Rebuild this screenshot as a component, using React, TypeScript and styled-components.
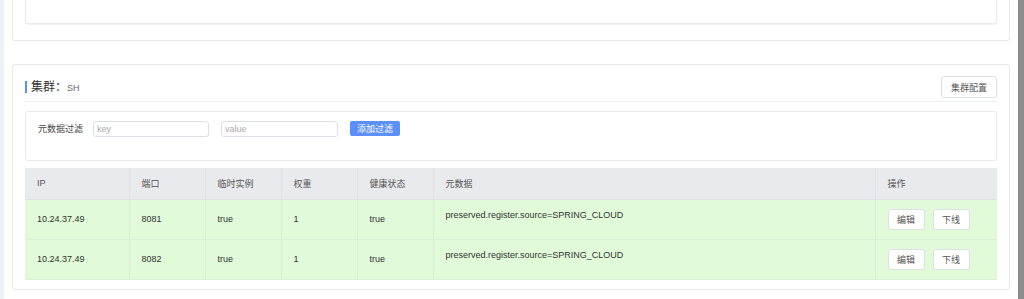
import styled, { createGlobalStyle } from "styled-components";

const GlobalStyle = createGlobalStyle`
  html, body {
    margin: 0;
    padding: 0;
    background: #ffffff;
    overflow: hidden;
  }
  body {
    font-family: "Liberation Sans", "Noto Sans CJK SC", sans-serif;
    color: #333;
  }
  *, *::before, *::after {
    box-sizing: border-box;
  }
`;

const instances = [
  { ip: "10.24.37.49", port: "8081", ephemeral: "true", weight: "1", healthy: "true", metadata: "preserved.register.source=SPRING_CLOUD" },
  { ip: "10.24.37.49", port: "8082", ephemeral: "true", weight: "1", healthy: "true", metadata: "preserved.register.source=SPRING_CLOUD" },
];

const Page = styled.div`
  display: flex;
  width: 1024px;
  height: 299px;
  overflow: hidden;
`;

const SideStrip = styled.div`
  width: 4px;
  flex-shrink: 0;
  background: #eef1f6;
`;

const Main = styled.div`
  flex: 1;
  padding: 0 8px;
  display: flex;
  flex-direction: column;
`;

const ScrollTrack = styled.div`
  width: 6px;
  flex-shrink: 0;
  background: #8c8c8c;
`;

const Card = styled.div<{ $clipped?: boolean }>`
  border: 1px solid #e6e7eb;
  border-top: ${(p) => (p.$clipped ? "none" : "1px solid #e6e7eb")};
  border-radius: ${(p) => (p.$clipped ? "0 0 3px 3px" : "3px")};
  padding: ${(p) => (p.$clipped ? "0 12px 16px" : "0 12px 9px")};
  margin-bottom: 23px;
  background: #fff;
`;

const EmptyBox = styled.div`
  height: 24px;
  border: 1px solid #e8e9ec;
  border-top: none;
  border-radius: 0 0 3px 3px;
  box-shadow: 0 1px 1px #f0f0f2;
`;

const CardHeader = styled.div`
  display: flex;
  align-items: center;
  justify-content: space-between;
  padding: 11px 0 3px;
  border-bottom: 1px solid #eeeff2;
`;

const Title = styled.div`
  display: flex;
  align-items: center;
  border-left: 2px solid #5b8cf7;
  padding-left: 4px;
  height: 12px;
  font-size: 12px;
  line-height: 12px;
  color: #333;
`;

const TitleValue = styled.span`
  font-size: 9px;
  line-height: 12px;
  color: #666;
  padding-top: 1px;
`;

const PlainButton = styled.button<{ $w: number; $h: number }>`
  width: ${(p) => p.$w}px;
  height: ${(p) => p.$h}px;
  border: 1px solid #dcdfe6;
  border-radius: 3px;
  background: #fff;
  color: #555;
  font-family: "Liberation Sans", "Noto Sans CJK SC", sans-serif;
  font-size: 9px;
  padding: 0;
  cursor: pointer;
`;

const FilterBox = styled.div`
  margin-top: 9px;
  height: 50px;
  border: 1px solid #e8e9ec;
  border-radius: 3px;
  padding: 9px 12px 0;
  display: flex;
  align-items: flex-start;
`;

const FilterLabel = styled.span`
  font-size: 9px;
  color: #444;
  line-height: 16px;
  width: 55px;
`;

const FilterInput = styled.input<{ $w: number }>`
  width: ${(p) => p.$w}px;
  height: 16px;
  border: 1px solid #dcdfe6;
  border-radius: 3px;
  padding: 0 3px;
  margin-right: 12px;
  font-family: "Liberation Sans", sans-serif;
  font-size: 9px;
  outline: none;
  &::placeholder {
    color: #aaa;
  }
`;

const PrimaryButton = styled.button`
  width: 50px;
  height: 15px;
  border: none;
  border-radius: 2px;
  background: #5b8ff9;
  color: #fff;
  font-family: "Liberation Sans", "Noto Sans CJK SC", sans-serif;
  font-size: 9px;
  padding: 0;
`;

const Table = styled.table`
  margin-top: 7px;
  width: 100%;
  border-collapse: collapse;
  table-layout: fixed;
  font-size: 9px;
`;

const HeadCell = styled.th<{ $w?: number }>`
  width: ${(p) => (p.$w ? `${p.$w}px` : "auto")};
  height: 31px;
  background: #e9eaee;
  color: #555;
  font-weight: normal;
  text-align: left;
  padding: 0 12px;
  border-right: 1px solid #dfe1e6;
  border-bottom: 1px solid #dfe1e6;
  &:last-child {
    border-right: none;
  }
`;

const Row = styled.tr`
  background: #e1fbd9;
`;

const Cell = styled.td<{ $top?: boolean }>`
  height: 40px;
  padding: ${(p) => (p.$top ? "10px 12px 0" : "0 12px")};
  vertical-align: ${(p) => (p.$top ? "top" : "middle")};
  color: #333;
  border-right: 1px solid #d9eed3;
  border-bottom: 1px solid #d9eed3;
  white-space: nowrap;
  &:last-child {
    border-right: none;
  }
`;

const Actions = styled.div`
  display: flex;
  gap: 8px;
`;

const App = () => {
  return (
    <Page>
      <GlobalStyle />
      <SideStrip />
      <Main>
        <Card $clipped>
          <EmptyBox />
        </Card>
        <Card>
          <CardHeader>
            <Title>
              集群：<TitleValue>SH</TitleValue>
            </Title>
            <PlainButton $w={56} $h={22}>集群配置</PlainButton>
          </CardHeader>
          <FilterBox>
            <FilterLabel>元数据过滤</FilterLabel>
            <FilterInput $w={116} placeholder="key" />
            <FilterInput $w={117} placeholder="value" />
            <PrimaryButton>添加过滤</PrimaryButton>
          </FilterBox>
          <Table>
            <thead>
              <tr>
                <HeadCell $w={104}>IP</HeadCell>
                <HeadCell $w={76}>端口</HeadCell>
                <HeadCell $w={76}>临时实例</HeadCell>
                <HeadCell $w={76}>权重</HeadCell>
                <HeadCell $w={76}>健康状态</HeadCell>
                <HeadCell>元数据</HeadCell>
                <HeadCell $w={122}>操作</HeadCell>
              </tr>
            </thead>
            <tbody>
              {instances.map((item) => (
                <Row key={item.port}>
                  <Cell>{item.ip}</Cell>
                  <Cell>{item.port}</Cell>
                  <Cell>{item.ephemeral}</Cell>
                  <Cell>{item.weight}</Cell>
                  <Cell>{item.healthy}</Cell>
                  <Cell $top>{item.metadata}</Cell>
                  <Cell>
                    <Actions>
                      <PlainButton $w={37} $h={21}>编辑</PlainButton>
                      <PlainButton $w={37} $h={21}>下线</PlainButton>
                    </Actions>
                  </Cell>
                </Row>
              ))}
            </tbody>
          </Table>
        </Card>
      </Main>
      <ScrollTrack />
    </Page>
  );
};

export default App;
